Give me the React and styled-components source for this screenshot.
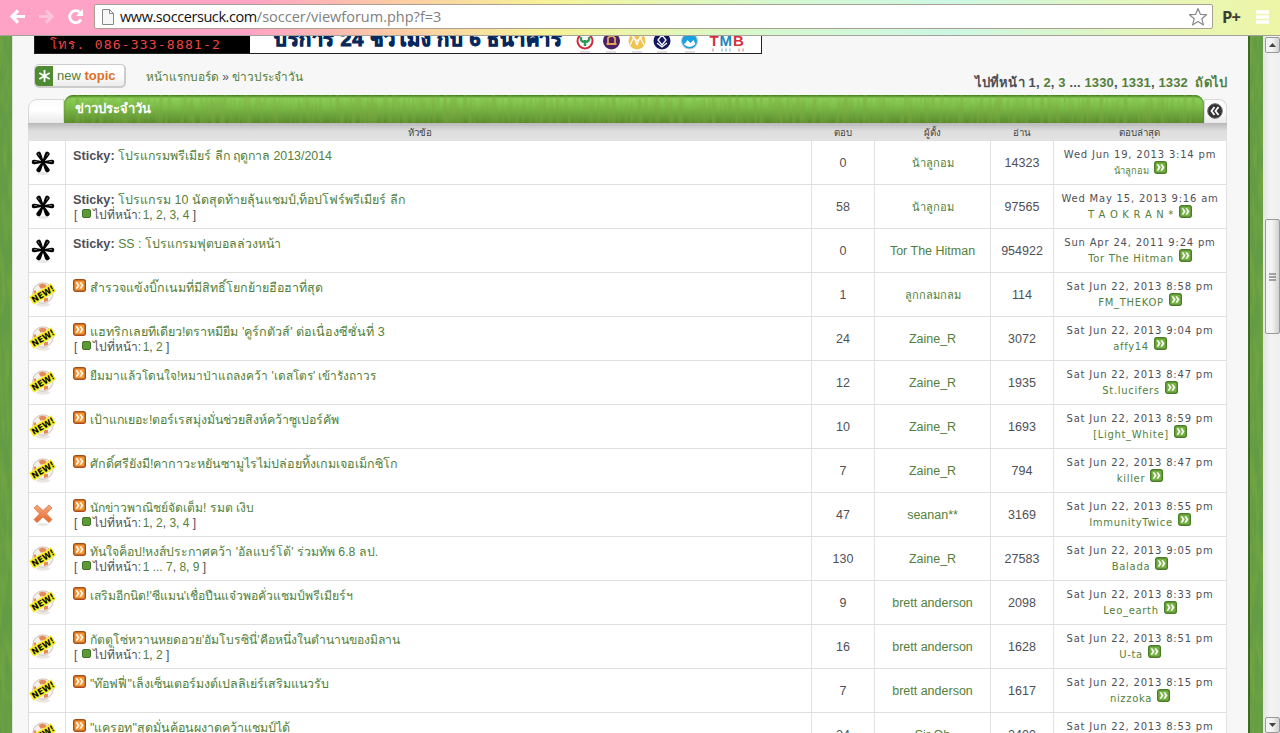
import React from 'react';
import styled, { createGlobalStyle } from 'styled-components';

const GlobalStyle = createGlobalStyle`
  * {
    box-sizing: border-box;
  }
  body {
    margin: 0;
    overflow: hidden;
    font-family: "Liberation Sans", "Noto Sans", sans-serif;
    font-size: 13px;
    color: #4f4f57;
  }
`
const Window = styled.div`
  display: flex;
  flex-direction: column;
  width: 1280px;
  height: 733px;
  overflow: hidden;
`
const Toolbar = styled.div`
  display: flex;
  align-items: center;
  flex: none;
  height: 36px;
  padding: 0 9px 2px 9px;
  border-bottom: 1px solid #a5a29c;
  background: linear-gradient(90deg, #ffa3c6 0, #ffa3c6 250px, #fccaa5 390px, #f6f398 550px, #d6f8d0 770px, #cdf7e4 950px, #e9f6b3 1190px, #edf5a6 1280px);
`
const NavIcon = styled.svg`
  flex: none;
  width: 17px;
  height: 17px;
  margin-right: 12px;
  opacity: ${props => props.$faded ? 0.35 : 1};
`
const AddressBar = styled.div`
  display: flex;
  align-items: center;
  flex: none;
  width: 1119px;
  height: 25px;
  margin-left: -2px;
  padding: 0 4px 0 7px;
  border: 1px solid #a9a08f;
  border-radius: 2px;
  background: white;
  font-family: "Open Sans", "Noto Sans", sans-serif;
  font-size: 14.5px;
  color: #808080;
  white-space: pre;
`
const Host = styled.span`
  color: #111;
  margin-left: 6px;
  letter-spacing: -0.42px;
`
const Star = styled.svg`
  width: 20px;
  height: 20px;
  margin-left: auto;
`
const Extension = styled.span`
  flex: none;
  margin-left: 9px;
  width: 34px;
  font-family: "Open Sans", sans-serif;
  font-weight: 700;
  font-size: 16.5px;
  letter-spacing: -0.8px;
  color: #3b3d33;
`
const MenuIcon = styled.svg`
  width: 14px;
  height: 14px;
`
const Viewport = styled.div`
  display: flex;
  flex: 1;
  min-height: 0;
`
const Grass = styled.div`
  flex: none;
  width: ${props => props.$width}px;
  background: #649c45;
  border-left: ${props => props.$right ? '2px solid #3a6b1f' : '0'};
  overflow: hidden;
`
const Content = styled.div`
  flex: 1;
  min-width: 0;
  padding: 0 21px 0 15px;
  border-left: 1px solid #dfe3dc;
  background: #f7f7f7;
`
const Banner = styled.div`
  display: flex;
  width: 728px;
  height: 18px;
  margin-left: 6px;
  border: 1px solid #222;
  border-top: 0;
  background: white;
  overflow: hidden;
`
const Phone = styled.div`
  flex: none;
  width: 215px;
  height: 17px;
  padding-left: 15px;
  background: black;
  color: #f04444;
  font-family: "DejaVu Sans Mono", "Noto Sans", monospace;
  font-size: 13px;
  line-height: 17px;
  letter-spacing: 1.2px;
  white-space: pre;
`
const Service = styled.div`
  flex: none;
  width: 301px;
  padding-left: 24px;
  font-weight: 900;
  font-size: 20px;
  line-height: 14px;
  margin-top: -4px;
  letter-spacing: 0.5px;
  color: #07285c;
  -webkit-text-stroke: 1px #07285c;
  white-space: nowrap;
`
const Banks = styled.svg`
  margin-left: 24px;
  width: 180px;
  height: 17px;
`
const Actions = styled.div`
  display: flex;
  height: 41px;
  padding: 10px 0 0 6px;
`
const NewTopic = styled.div`
  display: flex;
  align-items: center;
  width: 92px;
  height: 24px;
  padding: 1px;
  border: 1px solid #ccc;
  border-right-width: 2px;
  border-bottom-width: 2px;
  border-radius: 5px;
  background: linear-gradient(#fff 45%, #ececec);
  font-size: 13px;
  line-height: 18px;
  color: #547d3b;
  white-space: nowrap;
  b {
    color: #dd6e28;
  }
`
const NewMark = styled.svg`
  width: 18px;
  height: 20px;
  margin: 0 4px 0 -1px;
`
const Crumbs = styled.div`
  margin: 5px 0 0 20px;
  font-size: 11.9px;
  line-height: 16px;
  white-space: nowrap;
`
const Pages = styled.div`
  margin: 10px 0 0 auto;
  font-weight: 700;
  line-height: 18px;
  letter-spacing: 0.14px;
  white-space: pre;
`
const Link = styled.a`
  font-size: ${props => props.$size ? props.$size + 'px' : 'inherit'};
  color: #537f3b;
`
const Heading = styled.div`
  display: flex;
  align-items: flex-end;
  height: 28px;
`
const Tab = styled.div`
  width: ${props => props.$width}px;
  height: 24px;
  border: 1px solid #d9d9d9;
  border-bottom: 0;
  border-radius: ${props => props.$right ? '0 8px 0 0' : '9px 0 0 0'};
  background: linear-gradient(#fbfbfb, #fff 45%, #e9e9e9);
  svg {
    display: block;
    margin: 3px 0 0 2px;
  }
`
const TitleBar = styled.div`
  position: relative;
  flex: 1;
  height: 28px;
  border-radius: 9px 9px 0 0;
  background: linear-gradient(#4f8f28, #8dcf5a 12%, #7bbb48 45%, #5a8a2f 100%);
  box-shadow: inset 0 1px 2px #3f7a1d;
  overflow: hidden;
`
const Blades = styled.div`
  position: absolute;
  inset: 0;
`
const Title = styled.div`
  position: relative;
  padding-left: 11px;
  font-weight: 700;
  line-height: 27px;
  color: white;
`
const Columns = styled.div`
  display: grid;
  grid-template-columns: 38px 745px 63px 116px 63px 173px;
  width: 1199px;
`
const HeadRow = styled(Columns)`
  height: 18px;
  background: linear-gradient(#b9b9b9, #dedede 45%, #e2e2e2);
  font-size: 9.7px;
  line-height: 19px;
  text-align: center;
  color: #444;
`
const TopicHead = styled.span`
  grid-column: span 2;
`
const Row = styled(Columns)`
  height: 44px;
  border-left: 1px solid #ddd;
  background: white;
`
const Cell = styled.div`
  display: flex;
  align-items: center;
  justify-content: center;
  border-right: 1px solid #e2e2e2;
  border-bottom: 1px solid #dedede;
  font-size: 12.5px;
  white-space: nowrap;
`
const StatusCell = styled(Cell)`
  width: 37px;
  padding-right: 8px;
`
const TopicCell = styled(Cell)`
  display: block;
  margin-left: -1px;
  padding: 6px 0 0 7px;
`
const TopicLine = styled.div`
  display: flex;
  height: 17px;
  font-size: 12.7px;
  line-height: 19px;
  white-space: pre;
`
const PageLine = styled.div`
  display: flex;
  height: 15px;
  padding-left: 1px;
  font-size: 12px;
  line-height: 15px;
  white-space: pre;
`
const PageLabel = styled.span`
  width: 46px;
  margin-right: 4px;
`
const Bullet = styled.span`
  width: 9px;
  height: 9px;
  margin: 1px 2px 0 1px;
  border: 1px solid #3f7226;
  border-radius: 2px;
  background: #5d9a35;
`
const LastCell = styled(Cell)`
  display: block;
  padding-top: 7px;
  font-family: "DejaVu Sans", "Noto Sans", sans-serif;
  font-size: 10px;
  text-align: center;
`
const DateLine = styled.div`
  height: 14px;
  line-height: 14px;
  letter-spacing: 0.8px;
`
const UserLine = styled.div`
  display: flex;
  justify-content: center;
  height: 18px;
  line-height: 18px;
  letter-spacing: ${props => props.$thai ? 0 : 0.68}px;
  white-space: pre;
`
const ArrowBox = styled.svg`
  flex: none;
  width: 13px;
  height: 13px;
  margin: ${props => props.$green ? '-1px 0 0 5px' : '0 4px 0 0'};
`
const Scrollbar = styled.div`
  display: flex;
  flex-direction: column;
  align-items: center;
  width: 17px;
  padding: 1px 0 0 1px;
  background: linear-gradient(90deg, #e3e3e3, #f3f3f3 40%, #efefef);
`
const ScrollButton = styled.div`
  display: flex;
  align-items: center;
  justify-content: center;
  flex: none;
  width: 15px;
  height: 16px;
  border: 1px solid #999;
  border-radius: 2px;
  background: linear-gradient(90deg, #f4f4f4 45%, #d0d0d2);
`
const Thumb = styled(ScrollButton)`
  height: 115px;
  margin: 166px 0 auto;
`

function Arrow({ green }) {
  return (
    <ArrowBox viewBox="0 0 13 13" $green={green}>
      <rect x="0.7" y="0.7" width="11.6" height="11.6" rx="2" fill={green ? '#76b043' : '#f5952c'} stroke={green ? '#4a7d28' : '#a84a1d'} strokeWidth="1.4" />
      <path d="M3 3.5h1.4l2 3-2 3H3l1.6-3zM6.8 3.5h1.4l2 3-2 3H6.8l1.6-3z" fill="white" stroke="white" strokeWidth="0.4" />
    </ArrowBox>
  )
}

function Sticky() {
  return (
    <svg width="24" height="26" viewBox="0 0 24 26">
      <ellipse cx="12" cy="23.500" rx="6" ry="1.500" fill="#e8e8e8" />
      {[28, 90, 152, 208, 270, 332].map(angle => (
        <path key={angle} transform={`rotate(${angle} 12 12)`} d="M11.200 12L9.700 3.500Q9.300 .7 12 .7Q14.700 .7 14.300 3.500L12.800 12Z" fill="#050505" />
      ))}
      <circle cx="12" cy="12" r="2" fill="#050505" />
      <path d="M7 3.500l1.200 2.200M17 3.500l-1.200 2.200M3 11.500h3M18 11.500h3" stroke="#999" strokeWidth="0.700" />
    </svg>
  )
}

function NewBall() {
  return (
    <svg width="28" height="30" viewBox="0 0 28 30">
      <ellipse cx="14" cy="24.500" rx="7" ry="2" fill="#e9e6e2" />
      <circle cx="14" cy="13" r="10.200" fill="#f6f1ed" stroke="#c4b9b0" strokeWidth="0.800" />
      <path d="M9.500 5l4-1.500 4 1.500-1 3-5 .5zM4.500 11l2-1 1 3-2 3zM15 18l4 0 0 3-4 1z" fill="#e8875a" />
      <g transform="rotate(-31 14 14)">
        <text x="14" y="17" textAnchor="middle" textLength="25" lengthAdjust="spacingAndGlyphs" fontFamily="DejaVu Sans" fontWeight="700" fontSize="8.500" fill="#050500" stroke="#f5ee22" strokeWidth="3" paintOrder="stroke">NEW!</text>
      </g>
    </svg>
  )
}

function Locked() {
  return (
    <svg width="24" height="24" viewBox="0 0 24 24">
      <defs>
        <linearGradient id="cross" x1="0" y1="0" x2="0" y2="1">
          <stop offset="0" stopColor="#f5a880" />
          <stop offset="1" stopColor="#e6682a" />
        </linearGradient>
      </defs>
      <ellipse cx="12" cy="21.500" rx="6" ry="1.500" fill="#e8e8e8" />
      <path d="M6 2l6 5.500L18 2l3 3-5.500 5.800 5.500 5.800-3 3-6-5.600-6 5.600-3-3 5.500-5.800L3 5z" fill="url(#cross)" stroke="#d4713f" strokeWidth="0.700" />
    </svg>
  )
}

function Turf({ id, freq, opacity }) {
  return (
    <svg width="100%" height="100%" display="block">
      <filter id={id} x="0" y="0" width="100%" height="100%">
        <feTurbulence type="fractalNoise" baseFrequency={freq} numOctaves="3" seed="4" />
        <feColorMatrix values="0 0 0 0 0.2  0 0 0 0 0.4  0 0 0 0 0.05  3 0 0 0 -1.1" />
      </filter>
      <rect width="100%" height="100%" filter={`url(#${id})`} opacity={opacity} />
    </svg>
  )
}

const icons = { sticky: Sticky, new: NewBall, locked: Locked }

const topics = [
  { icon: 'sticky', size: 12.38, title: 'โปรแกรมพรีเมียร์ ลีก ฤดูกาล 2013/2014', replies: '0', author: 'น้าลูกอม', views: '14323', date: 'Wed Jun 19, 2013 3:14 pm', last: 'น้าลูกอม', thai: true },
  { icon: 'sticky', size: 12.45, title: 'โปรแกรม 10 นัดสุดท้ายลุ้นแชมป์,ท็อปโฟร์พรีเมียร์ ลีก', pages: ['1', '2', '3', '4'], replies: '58', author: 'น้าลูกอม', views: '97565', date: 'Wed May 15, 2013 9:16 am', last: 'T A O K R A N *', thai: true },
  { icon: 'sticky', size: 12.33, title: 'SS : โปรแกรมฟุตบอลล่วงหน้า', replies: '0', author: 'Tor The Hitman', views: '954922', date: 'Sun Apr 24, 2011 9:24 pm', last: 'Tor The Hitman' },
  { icon: 'new', size: 12.46, title: 'สำรวจแข้งบิ๊กเนมที่มีสิทธิ์โยกย้ายฮือฮาที่สุด', replies: '1', author: 'ลูกกลมกลม', views: '114', date: 'Sat Jun 22, 2013 8:58 pm', last: 'FM_THEKOP', thai: true },
  { icon: 'new', size: 12.56, title: "แฮทริกเลยทีเดียว!ตราหมียืม 'คูร์กตัวส์' ต่อเนื่องซีซั่นที่ 3", pages: ['1', '2'], replies: '24', author: 'Zaine_R', views: '3072', date: 'Sat Jun 22, 2013 9:04 pm', last: 'affy14' },
  { icon: 'new', size: 11.9, title: "ยืมมาแล้วโดนใจ!หมาป่าแถลงคว้า 'เดสโตร' เข้ารังถาวร", replies: '12', author: 'Zaine_R', views: '1935', date: 'Sat Jun 22, 2013 8:47 pm', last: 'St.lucifers' },
  { icon: 'new', size: 12.36, title: 'เป้าแกเยอะ!ตอร์เรสมุ่งมั่นช่วยสิงห์คว้าซูเปอร์คัพ', replies: '10', author: 'Zaine_R', views: '1693', date: 'Sat Jun 22, 2013 8:59 pm', last: '[Light_White]' },
  { icon: 'new', size: 12.52, title: 'ศักดิ์ศรียังมี!คากาวะหยันซามูไรไม่ปล่อยทิ้งเกมเจอเม็กซิโก', replies: '7', author: 'Zaine_R', views: '794', date: 'Sat Jun 22, 2013 8:47 pm', last: 'killer' },
  { icon: 'locked', size: 12.11, title: 'นักข่าวพาณิชย์จัดเต็ม! รมต เงิบ', pages: ['1', '2', '3', '4'], replies: '47', author: 'seanan**', views: '3169', date: 'Sat Jun 22, 2013 8:55 pm', last: 'ImmunityTwice' },
  { icon: 'new', size: 12.28, title: "ทันใจค็อป!หงส์ประกาศคว้า 'อัลแบร์โต้' ร่วมทัพ 6.8 ลป.", pages: ['1 ... 7', '8', '9'], replies: '130', author: 'Zaine_R', views: '27583', date: 'Sat Jun 22, 2013 9:05 pm', last: 'Balada' },
  { icon: 'new', size: 12.26, title: "เสริมอีกนิด!'ซีแมน'เชื่อปืนแจ๋วพอคั่วแชมป์พรีเมียร์ฯ", replies: '9', author: 'brett anderson', views: '2098', date: 'Sat Jun 22, 2013 8:33 pm', last: 'Leo_earth' },
  { icon: 'new', size: 12.18, title: "กัตตูโซ่หวานหยดอวย'อัมโบรซินี่'คือหนึ่งในตำนานของมิลาน", pages: ['1', '2'], replies: '16', author: 'brett anderson', views: '1628', date: 'Sat Jun 22, 2013 8:51 pm', last: 'U-ta' },
  { icon: 'new', size: 12.4, title: '"ท๊อฟฟี่"เล็งเซ็นเตอร์มงต์เปลลิเย่ร์เสริมแนวรับ', replies: '7', author: 'brett anderson', views: '1617', date: 'Sat Jun 22, 2013 8:15 pm', last: 'nizzoka' },
  { icon: 'new', size: 12.48, title: '"แครอท"สุดมั่นค้อนผงาดคว้าแชมป์ได้', replies: '24', author: 'Sir Oh', views: '2400', date: 'Sat Jun 22, 2013 8:53 pm' },
]

function Topic({ topic }) {
  const Icon = icons[topic.icon]
  const thaiLast = topic.last === topic.author && topic.thai
  return (
    <Row>
      <StatusCell><Icon /></StatusCell>
      <TopicCell>
        <TopicLine>
          {topic.icon === 'sticky' ? <b>Sticky: </b> : <Arrow />}
          <Link $size={topic.size}>{topic.title}</Link>
        </TopicLine>
        {
          topic.pages
          &&
          <PageLine>
            {'[ '}
            <Bullet />
            <PageLabel>ไปที่หน้า:</PageLabel>
            {topic.pages.map((page, i) => (
              <React.Fragment key={page}>{i > 0 && ', '}<Link>{page}</Link></React.Fragment>
            ))}
            {' ]'}
          </PageLine>
        }
      </TopicCell>
      <Cell>{topic.replies}</Cell>
      <Cell><Link $size={topic.thai && 11.1}>{topic.author}</Link></Cell>
      <Cell>{topic.views}</Cell>
      <LastCell>
        <DateLine>{topic.date}</DateLine>
        {
          topic.last
          &&
          <UserLine $thai={thaiLast}>
            <Link $size={thaiLast && 9.3}>{topic.last}</Link>
            <Arrow green />
          </UserLine>
        }
      </LastCell>
    </Row>
  )
}

export default function App() {
  return (
    <Window>
      <GlobalStyle />
      <Toolbar>
        <NavIcon viewBox="0 0 17 17"><path d="M16 8.500H3M9 2.500l-6 6 6 6" fill="none" stroke="white" strokeWidth="3.200" /></NavIcon>
        <NavIcon viewBox="0 0 17 17" $faded><path d="M1 8.500h13M8 2.500l6 6-6 6" fill="none" stroke="white" strokeWidth="3.200" /></NavIcon>
        <NavIcon viewBox="0 0 17 17"><path d="M14 11.500a6 6 0 1 1-1-7" fill="none" stroke="white" strokeWidth="2.800" /><path d="M16 1v7H9z" fill="white" /></NavIcon>
        <AddressBar>
          <svg width="12" height="16" viewBox="0 0 12 16"><path d="M.5.5h7l4 4v11H.5zM7.500.5v4h4" fill="#f7f7f7" stroke="#888" /></svg>
          <Host>www.soccersuck.com</Host>/soccer/viewforum.php?f=3
          <Star viewBox="0 0 20 20"><path d="M10 1.500l2.400 5.800 6.100.4-4.700 4 1.600 6.300-5.400-3.500L4.600 18l1.600-6.300-4.700-4 6.100-.4z" fill="white" stroke="#8a8a8a" strokeWidth="1.200" strokeLinejoin="round" /></Star>
        </AddressBar>
        <Extension>P+</Extension>
        <MenuIcon viewBox="0 0 14 14"><path d="M0 2h13M0 7h13M0 12h13" stroke="white" strokeWidth="3.400" /></MenuIcon>
      </Toolbar>
      <Viewport>
        <Grass $width={12}><Turf id="turf-left" freq="0.2 0.03" opacity="0.5" /></Grass>
        <Content>
          <Banner>
            <Phone>โทร. 086-333-8881-2</Phone>
            <Service>บริการ 24 ชั่วโมง กับ 6 ธนาคาร</Service>
            <Banks viewBox="0 0 180 17">
              <circle cx="10" cy="5" r="7.500" fill="#fff" stroke="#d2293a" strokeWidth="2" />
              <path d="M10 10V4M10 6Q5 6 6 1M10 6q5 0 4-5" stroke="#2b9b57" strokeWidth="2.500" fill="none" />
              <circle cx="36.500" cy="5" r="8.500" fill="#4c2168" />
              <path d="M31.500 8h10M33 7V2l3.500-3L40 2v5" stroke="#e3a45a" strokeWidth="1.800" fill="none" />
              <circle cx="62" cy="5" r="8.500" fill="#f0c453" />
              <path d="M55 9l4-8 3 8M69 9l-4-8-3 8M57 0l5 5 5-5" stroke="#fff" strokeWidth="1.200" fill="none" />
              <circle cx="87" cy="5" r="8.500" fill="#14165f" />
              <path d="M87-1l4 5-4 5-4-5zM82 7l5 4 5-4" stroke="#fff" strokeWidth="1.300" fill="none" />
              <circle cx="114.500" cy="5" r="8" fill="#1ba0df" stroke="#bfcbd2" />
              <path d="M108.500 8q6 6 12 0l-2-4-3 3-3-3-2 3z" fill="#fff" />
              <g fontFamily="Liberation Sans" fontWeight="700" fontSize="15">
                <text x="134.500" y="10" fill="#d62f3b">T</text>
                <text x="144.500" y="10" fill="#2387bb">M</text>
                <text x="158" y="10" fill="#d62f3b">B</text>
              </g>
              <path d="M5 16h10M31 16h10M57 16h10M82 16h10M110 16h10" stroke="#dcd4dc" strokeWidth="1.500" />
              <path d="M138 12.500v3M164 12.500v3M168 12.500v3" stroke="#f0b9bd" strokeWidth="2" />
              <path d="M147 12.500v3M151 12.500v3M155 12.500v3" stroke="#b5d8e6" strokeWidth="2" />
            </Banks>
          </Banner>
          <Actions>
            <NewTopic>
              <NewMark viewBox="0 0 18 20">
                <path d="M4 0h14v20H4q-4 0-4-4V4q0-4 4-4" fill="#4f8b32" />
                <path d="M9.500 4v12M4.300 7l10.400 6M4.300 13l10.400-6" stroke="white" strokeWidth="1.800" />
              </NewMark>
              <span>new <b>topic</b></span>
            </NewTopic>
            <Crumbs><Link>หน้าแรกบอร์ด</Link> » <Link>ข่าวประจำวัน</Link></Crumbs>
            <Pages>ไปที่หน้า 1, <Link>2</Link>, <Link>3</Link> ... <Link>1330</Link>, <Link>1331</Link>, <Link>1332</Link>  <Link>ถัดไป</Link></Pages>
          </Actions>
          <Heading>
            <Tab $width={36} />
            <TitleBar>
              <Blades><Turf id="turf-title" freq="0.25 0.03" opacity="0.5" /></Blades>
              <Title>ข่าวประจำวัน</Title>
            </TitleBar>
            <Tab $width={23} $right>
              <svg width="16" height="16" viewBox="0 0 16 16">
                <circle cx="8" cy="8" r="7.300" fill="#333" stroke="#666" />
                <path d="M7.500 4L4.500 8l3 4M11.500 4l-3 4 3 4" fill="none" stroke="white" strokeWidth="1.800" />
              </svg>
            </Tab>
          </Heading>
          <HeadRow>
            <TopicHead>หัวข้อ</TopicHead>
            <span>ตอบ</span>
            <span>ผู้ตั้ง</span>
            <span>อ่าน</span>
            <span>ตอบล่าสุด</span>
          </HeadRow>
          {topics.map(topic => <Topic key={topic.title} topic={topic} />)}
        </Content>
        <Grass $width={15} $right><Turf id="turf-right" freq="0.2 0.03" opacity="0.5" /></Grass>
        <Scrollbar>
          <ScrollButton><svg width="7" height="4"><path d="M0 4l3.500-4L7 4z" fill="#444" /></svg></ScrollButton>
          <Thumb><svg width="7" height="8"><path d="M0 1h7M0 4h7M0 7h7" stroke="#555" /></svg></Thumb>
          <ScrollButton><svg width="7" height="4"><path d="M0 0h7L3.500 4z" fill="#444" /></svg></ScrollButton>
        </Scrollbar>
      </Viewport>
    </Window>
  )
}
